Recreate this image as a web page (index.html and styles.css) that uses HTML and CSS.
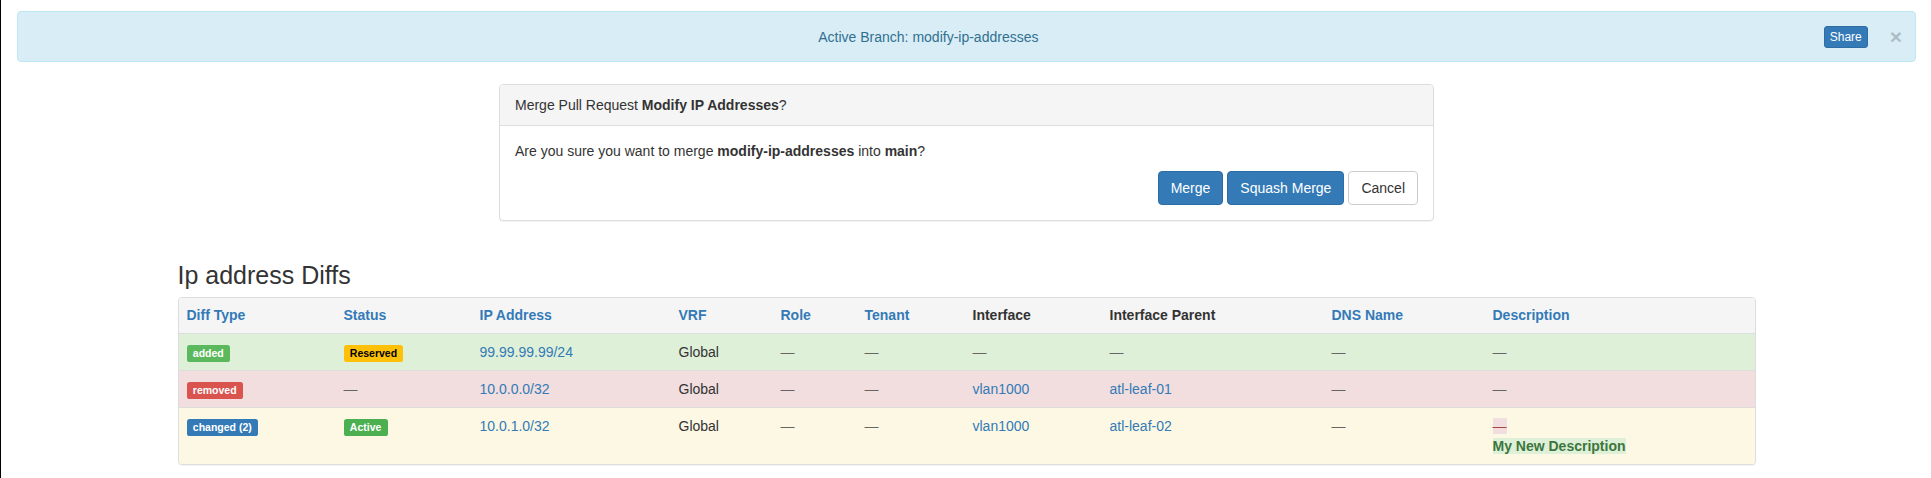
FILE: index.html
```html
<!DOCTYPE html>
<html>
<head>
<meta charset="utf-8">
<link rel="stylesheet" href="styles.css">
</head>
<body>
  <div class="alert">
    <div class="alert-text">Active Branch: modify-ip-addresses</div>
    <button class="btn btn-primary btn-xs">Share</button>
    <span class="close">&times;</span>
  </div>

  <div class="panel merge-panel">
    <div class="panel-heading">Merge Pull Request <strong>Modify IP Addresses</strong>?</div>
    <div class="panel-body">
      <p class="confirm">Are you sure you want to merge <strong>modify-ip-addresses</strong> into <strong>main</strong>?</p>
      <div class="actions">
        <button class="btn btn-primary">Merge</button>
        <button class="btn btn-primary">Squash Merge</button>
        <button class="btn btn-default">Cancel</button>
      </div>
    </div>
  </div>

  <div class="diffs">
    <h3 class="diffs-title">Ip address Diffs</h3>
    <div class="panel table-panel">
      <table class="table">
        <colgroup>
          <col class="c1"><col class="c2"><col class="c3"><col class="c4"><col class="c5">
          <col class="c6"><col class="c7"><col class="c8"><col class="c9"><col class="c10">
        </colgroup>
        <thead>
          <tr>
            <th><a class="link">Diff Type</a></th>
            <th><a class="link">Status</a></th>
            <th><a class="link">IP Address</a></th>
            <th><a class="link">VRF</a></th>
            <th><a class="link">Role</a></th>
            <th><a class="link">Tenant</a></th>
            <th>Interface</th>
            <th>Interface Parent</th>
            <th><a class="link">DNS Name</a></th>
            <th><a class="link">Description</a></th>
          </tr>
        </thead>
        <tbody>
          <tr class="row-added">
            <td><span class="label label-success">added</span></td>
            <td><span class="label label-reserved">Reserved</span></td>
            <td><a class="link">99.99.99.99/24</a></td>
            <td>Global</td>
            <td><span class="muted">&mdash;</span></td>
            <td><span class="muted">&mdash;</span></td>
            <td><span class="muted">&mdash;</span></td>
            <td><span class="muted">&mdash;</span></td>
            <td><span class="muted">&mdash;</span></td>
            <td><span class="muted">&mdash;</span></td>
          </tr>
          <tr class="row-removed">
            <td><span class="label label-danger">removed</span></td>
            <td><span class="muted">&mdash;</span></td>
            <td><a class="link">10.0.0.0/32</a></td>
            <td>Global</td>
            <td><span class="muted">&mdash;</span></td>
            <td><span class="muted">&mdash;</span></td>
            <td><a class="link">vlan1000</a></td>
            <td><a class="link">atl-leaf-01</a></td>
            <td><span class="muted">&mdash;</span></td>
            <td><span class="muted">&mdash;</span></td>
          </tr>
          <tr class="row-changed">
            <td><span class="label label-primary">changed (2)</span></td>
            <td><span class="label label-active">Active</span></td>
            <td><a class="link">10.0.1.0/32</a></td>
            <td>Global</td>
            <td><span class="muted">&mdash;</span></td>
            <td><span class="muted">&mdash;</span></td>
            <td><a class="link">vlan1000</a></td>
            <td><a class="link">atl-leaf-02</a></td>
            <td><span class="muted">&mdash;</span></td>
            <td>
              <div><span class="diff-del">&mdash;</span></div>
              <div><span class="diff-ins">My New Description</span></div>
            </td>
          </tr>
        </tbody>
      </table>
    </div>
  </div>
</body>
</html>
```

FILE: styles.css
```css
* { box-sizing: border-box; }

html, body {
  background: #fff;
}

body {
  margin: 0;
  border-left: 1px solid #000;
  min-height: 478px;
  padding: 11px 15px 0 16px;
  font-family: "Liberation Sans", Arial, sans-serif;
  font-size: 14px;
  line-height: 20px;
  color: #333;
}

/* Alert */
.alert {
  display: flex;
  align-items: center;
  height: 51px;
  padding: 0 13px 0 15px;
  background: #d9edf7;
  border: 1px solid #bce8f1;
  border-radius: 4px;
  color: #31708f;
}

.alert-text {
  flex: 1;
  text-align: center;
}

.btn {
  display: inline-block;
  font-family: inherit;
  font-size: 14px;
  line-height: 20px;
  padding: 6px 12px;
  border: 1px solid transparent;
  border-radius: 4px;
  cursor: pointer;
  font-weight: 400;
}

.btn-primary {
  background: #337ab7;
  border-color: #2e6da4;
  color: #fff;
}

.btn-default {
  background: #fff;
  border-color: #ccc;
  color: #333;
}

.btn-xs {
  font-size: 12px;
  line-height: 18px;
  padding: 1px 5px;
  border-radius: 3px;
}

.close {
  margin-left: 22px;
  font-size: 21px;
  font-weight: 700;
  line-height: 1;
  color: #000;
  opacity: 0.2;
}

/* Panels */
.panel {
  background: #fff;
  border: 1px solid #ddd;
  border-radius: 4px;
  box-shadow: 0 1px 1px rgba(0, 0, 0, 0.05);
}

.merge-panel {
  width: 935px;
  margin: 22px auto 0;
}

.panel-heading {
  padding: 10px 15px;
  background: #f5f5f5;
  border-bottom: 1px solid #ddd;
  border-radius: 3px 3px 0 0;
}

.panel-body {
  padding: 15px;
}

.confirm {
  margin: 0 0 10px;
}

.actions {
  display: flex;
  justify-content: flex-end;
  gap: 4px;
}

/* Diffs */
.diffs {
  width: 1578px;
  margin: 40px auto 0;
}

.diffs-title {
  margin: 0 0 8px;
  font-size: 25px;
  line-height: 28px;
  font-weight: 400;
  color: #333;
}

.table-panel {
  overflow: hidden;
}

.table {
  width: 100%;
  border-collapse: collapse;
  table-layout: fixed;
}

.c1 { width: 157px; }
.c2 { width: 136px; }
.c3 { width: 199px; }
.c4 { width: 102px; }
.c5 { width: 84px; }
.c6 { width: 108px; }
.c7 { width: 137px; }
.c8 { width: 222px; }
.c9 { width: 161px; }
.c10 { width: 270px; }

.table th {
  text-align: left;
  font-weight: 700;
  padding: 7px 8px 8px;
  background: #f5f5f5;
  border-bottom: 1px solid #ddd;
  vertical-align: top;
}

.table td {
  padding: 8px;
  border-top: 1px solid #ddd;
  vertical-align: top;
}

.table tbody tr:first-child td {
  border-top: 0;
}

.link {
  color: #337ab7;
  text-decoration: none;
}

.muted {
  color: #666;
}

.row-added td { background: #dff0d8; }
.row-removed td { background: #f2dede; }
.row-changed td { background: #fcf8e3; }

.label {
  display: inline;
  padding: 0.2em 0.6em 0.3em;
  font-size: 75%;
  font-weight: 700;
  line-height: 1;
  color: #fff;
  border-radius: 0.25em;
  white-space: nowrap;
}

.label-success { background: #5cb85c; }
.label-danger { background: #d9534f; }
.label-primary { background: #337ab7; }
.label-reserved { background: #ffc107; color: #000; }
.label-active { background: #4caf50; }

.diff-del {
  background: #f2dede;
  color: #a94442;
}

.diff-ins {
  background: #dff0d8;
  color: #3c763d;
  font-weight: 700;
}
```
